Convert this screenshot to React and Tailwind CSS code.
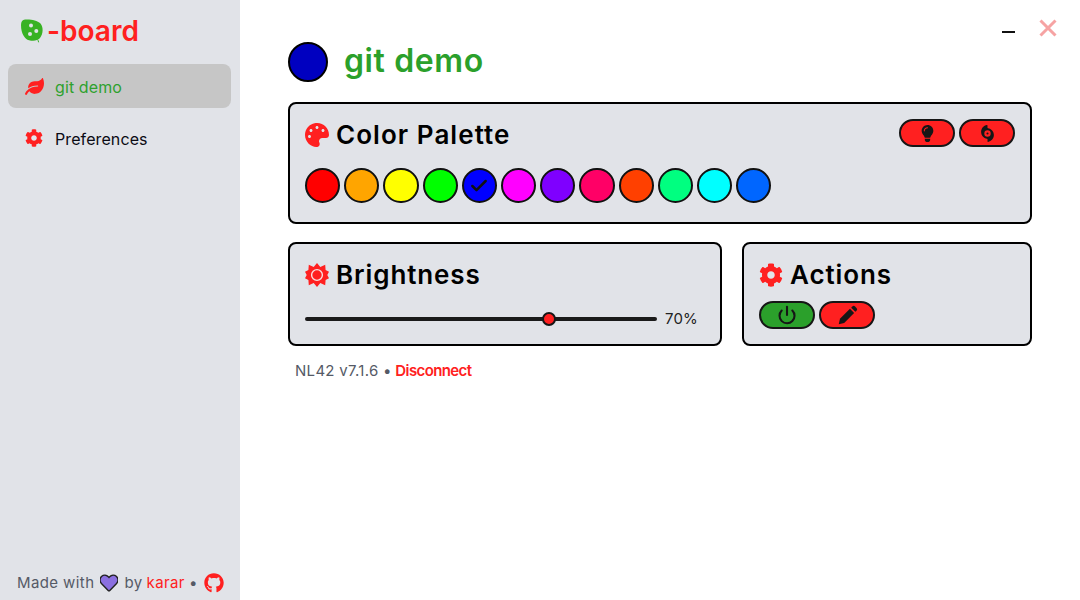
import React from 'react';
import { FaPalette, FaCog, FaLeaf, FaGithub, FaLightbulb, FaHeart } from 'react-icons/fa';
import { FaHurricane } from 'react-icons/fa6';
import { Power, Check } from 'lucide-react';

const swatches = [
  'bg-[#ff0000]', 'bg-[#ffa500]', 'bg-[#ffff00]', 'bg-[#00ff00]', 'bg-[#0000ff]', 'bg-[#ff00ff]',
  'bg-[#7f00ff]', 'bg-[#ff0066]', 'bg-[#ff4000]', 'bg-[#00ff80]', 'bg-[#00ffff]', 'bg-[#0066ff]',
];

const Logo = () => (
  <svg viewBox="0 0 24 24" className="w-[24px] h-[24px] shrink-0">
    <path d="M5 .5C11 .2 17 1 20.500 4.500c3 3.500 2.800 10.500-.5 14.500-2.500 3-7 3.200-11 2.200C5 20.200 1 15 1 6 1 2.500 2.500.6 5 .5z" fill="#38b224" />
    <path d="M17.500 20.500c.6.8 1 1.600 1.100 2.800" stroke="#38b224" strokeWidth="1" fill="none" />
    <circle cx="11" cy="6.500" r="2" fill="#e1e3e8" />
    <circle cx="16.300" cy="12" r="2" fill="#e1e3e8" />
    <circle cx="10" cy="15" r="2" fill="#e1e3e8" />
  </svg>
);

const SunIcon = () => (
  <svg viewBox="0 0 24 24" className="w-[24px] h-[24px] block">
    <path d="M12 0l3.300 3.900 4.900-2.100.4 5.200 3.400 1.700-1.700 3.300 1.700 3.300-3.400 1.700-.4 5.200-4.900-2.100L12 24l-3.300-3.900-4.900 2.100-.4-5.200L0 15.300 1.700 12 0 8.700 3.400 7l.4-5.200 4.900 2.100z" fill="#ff2020" />
    <circle cx="12" cy="12" r="5.400" fill="#ff2020" stroke="#f8e0e0" strokeWidth="1.400" />
  </svg>
);

const PenIcon = () => (
  <svg viewBox="0 0 24 24" className="w-[21px] h-[21px]" fill="currentColor">
    <path d="M2 22l1.400-6.200L14.800 4.400l4.800 4.800L8.200 20.600z" />
    <path d="M16.200 3l1.300-1.300a2.200 2.200 0 0 1 3.100 0l1.700 1.700a2.200 2.200 0 0 1 0 3.100L21 7.800z" />
  </svg>
);

const PillButton = ({ color, children }) => (
  <button className={`w-[56px] h-[28px] rounded-full border-2 border-[#161616] flex items-center justify-center text-[#161616] ${color}`}>
    {children}
  </button>
);

const Card = ({ className, children }) => (
  <div className={`bg-[#e1e3e8] border-2 border-black rounded-lg px-[15px] ${className}`}>{children}</div>
);

const CardTitle = ({ icon, className, children }) => (
  <div className={`flex items-center gap-[7px] text-[26px] leading-[32px] font-semibold text-black ${className}`}>
    <span className="text-[#ff2020] text-[24px]">{icon}</span>
    {children}
  </div>
);

export default function App() {
  return (
    <div className="w-[1080px] h-[600px] flex bg-white overflow-hidden font-['Inter',sans-serif] relative">
      {/* Sidebar */}
      <aside className="w-[240px] h-full bg-[#e1e3e8] flex flex-col pl-[8px] pr-[9px]">
        <div className="flex items-center gap-[3px] pl-[12px] pt-[15px] h-[64px] pb-[17px]">
          <Logo />
          <span className="text-[28px] leading-[28px] font-semibold text-[#ff2020]">-board</span>
        </div>
        <div className="h-[44px] rounded-lg bg-[#c6c6c6] flex items-center pl-[17px] gap-[11px] pt-[2px] text-[16px] tracking-[0.1px] text-[#2ea12e]">
          <FaLeaf className="text-[#ff2020] text-[19px] -mt-[2px]" />
          git demo
        </div>
        <div className="h-[44px] mt-[8px] rounded-lg flex items-center pl-[17px] gap-[12px] pt-[2px] text-[16px] tracking-[0.1px] text-[#0b0b14]">
          <FaCog className="text-[#ff2020] text-[18px] -mt-[2px]" />
          Preferences
        </div>
        <div className="mt-auto h-[36px] pl-[9px] pt-[2px] flex items-center text-[15px] tracking-[0.4px] text-[#555a66]">
          Made with
          <FaHeart className="mx-[6px] text-[18px] text-[#8b6fe0] stroke-[#222] stroke-[40]" />
          by
          <span className="text-[#ff2020] ml-[4px]">karar</span>
          <span className="ml-[4px]">•</span>
          <FaGithub className="ml-[6px] text-[20px] text-[#ff2020]" />
        </div>
      </aside>

      {/* Main */}
      <main className="flex-1 px-[48px] pt-[42px]">
        <div className="flex items-center gap-[16px] h-[40px]">
          <div className="w-[40px] h-[40px] rounded-full bg-[#0000c0] border-2 border-black" />
          <h1 className="text-[32px] font-semibold text-[#2ba02b] tracking-[0.6px] -mt-[2px]">git demo</h1>
        </div>

        <Card className="mt-[20px] h-[122px] pt-[15px]">
          <div className="flex items-center justify-between">
            <CardTitle icon={<FaPalette />} className="tracking-[1.05px]">Color Palette</CardTitle>
            <div className="flex gap-[4px] -mt-[4px]">
              <PillButton color="bg-[#ff2020]"><FaLightbulb className="text-[17px]" /></PillButton>
              <PillButton color="bg-[#ff2020]"><FaHurricane className="text-[17px]" /></PillButton>
            </div>
          </div>
          <div className="flex gap-[4px] mt-[17px]">
            {swatches.map((c, i) => (
              <div key={i} className={`w-[35.2px] h-[35.2px] rounded-full border-2 border-[#111] flex items-center justify-center ${c}`}>
                {i === 4 && <Check size={20} strokeWidth={3} className="text-[#111]" />}
              </div>
            ))}
          </div>
        </Card>

        <div className="flex gap-[20px] mt-[18px]">
          <Card className="w-[434px] h-[104px] pt-[15px]">
            <CardTitle icon={<SunIcon />} className="tracking-[0.9px]">Brightness</CardTitle>
            <div className="flex items-center mt-[17px]">
              <div className="relative w-[352px] h-[4px] rounded-full bg-[#1a1a1a]">
                <div className="absolute left-[237px] -top-[5px] w-[14px] h-[14px] rounded-full bg-[#ff2020] border-2 border-[#161616]" />
              </div>
              <span className="ml-[8px] text-[15px] tracking-[0.2px] text-[#222]">70%</span>
            </div>
          </Card>
          <Card className="w-[290px] h-[104px] pt-[15px]">
            <CardTitle icon={<FaCog />} className="tracking-[0.9px]">Actions</CardTitle>
            <div className="flex gap-[4px] mt-[10px]">
              <PillButton color="bg-[#2ba02b]"><Power size={20} strokeWidth={2.5} /></PillButton>
              <PillButton color="bg-[#ff2020]"><PenIcon /></PillButton>
            </div>
          </Card>
        </div>

        <div className="mt-[14px] pl-[7px] text-[15px] leading-[22px] tracking-[0.3px] text-[#555a66]">
          NL42 v7.1.6 • <span className="text-[#ff2020] font-semibold tracking-[-0.6px] -ml-[1px]">Disconnect</span>
        </div>
      </main>

      {/* Window controls */}
      <div className="absolute top-[31px] left-[1002px] w-[13px] h-[1.5px] bg-[#111]" />
      <svg viewBox="0 0 18 18" className="absolute top-[19px] left-[1039px] w-[18px] h-[18px]">
        <path d="M1.500 1.500l15 15M16.500 1.500l-15 15" stroke="#f6a3a3" strokeWidth="3" />
      </svg>
    </div>
  );
}
